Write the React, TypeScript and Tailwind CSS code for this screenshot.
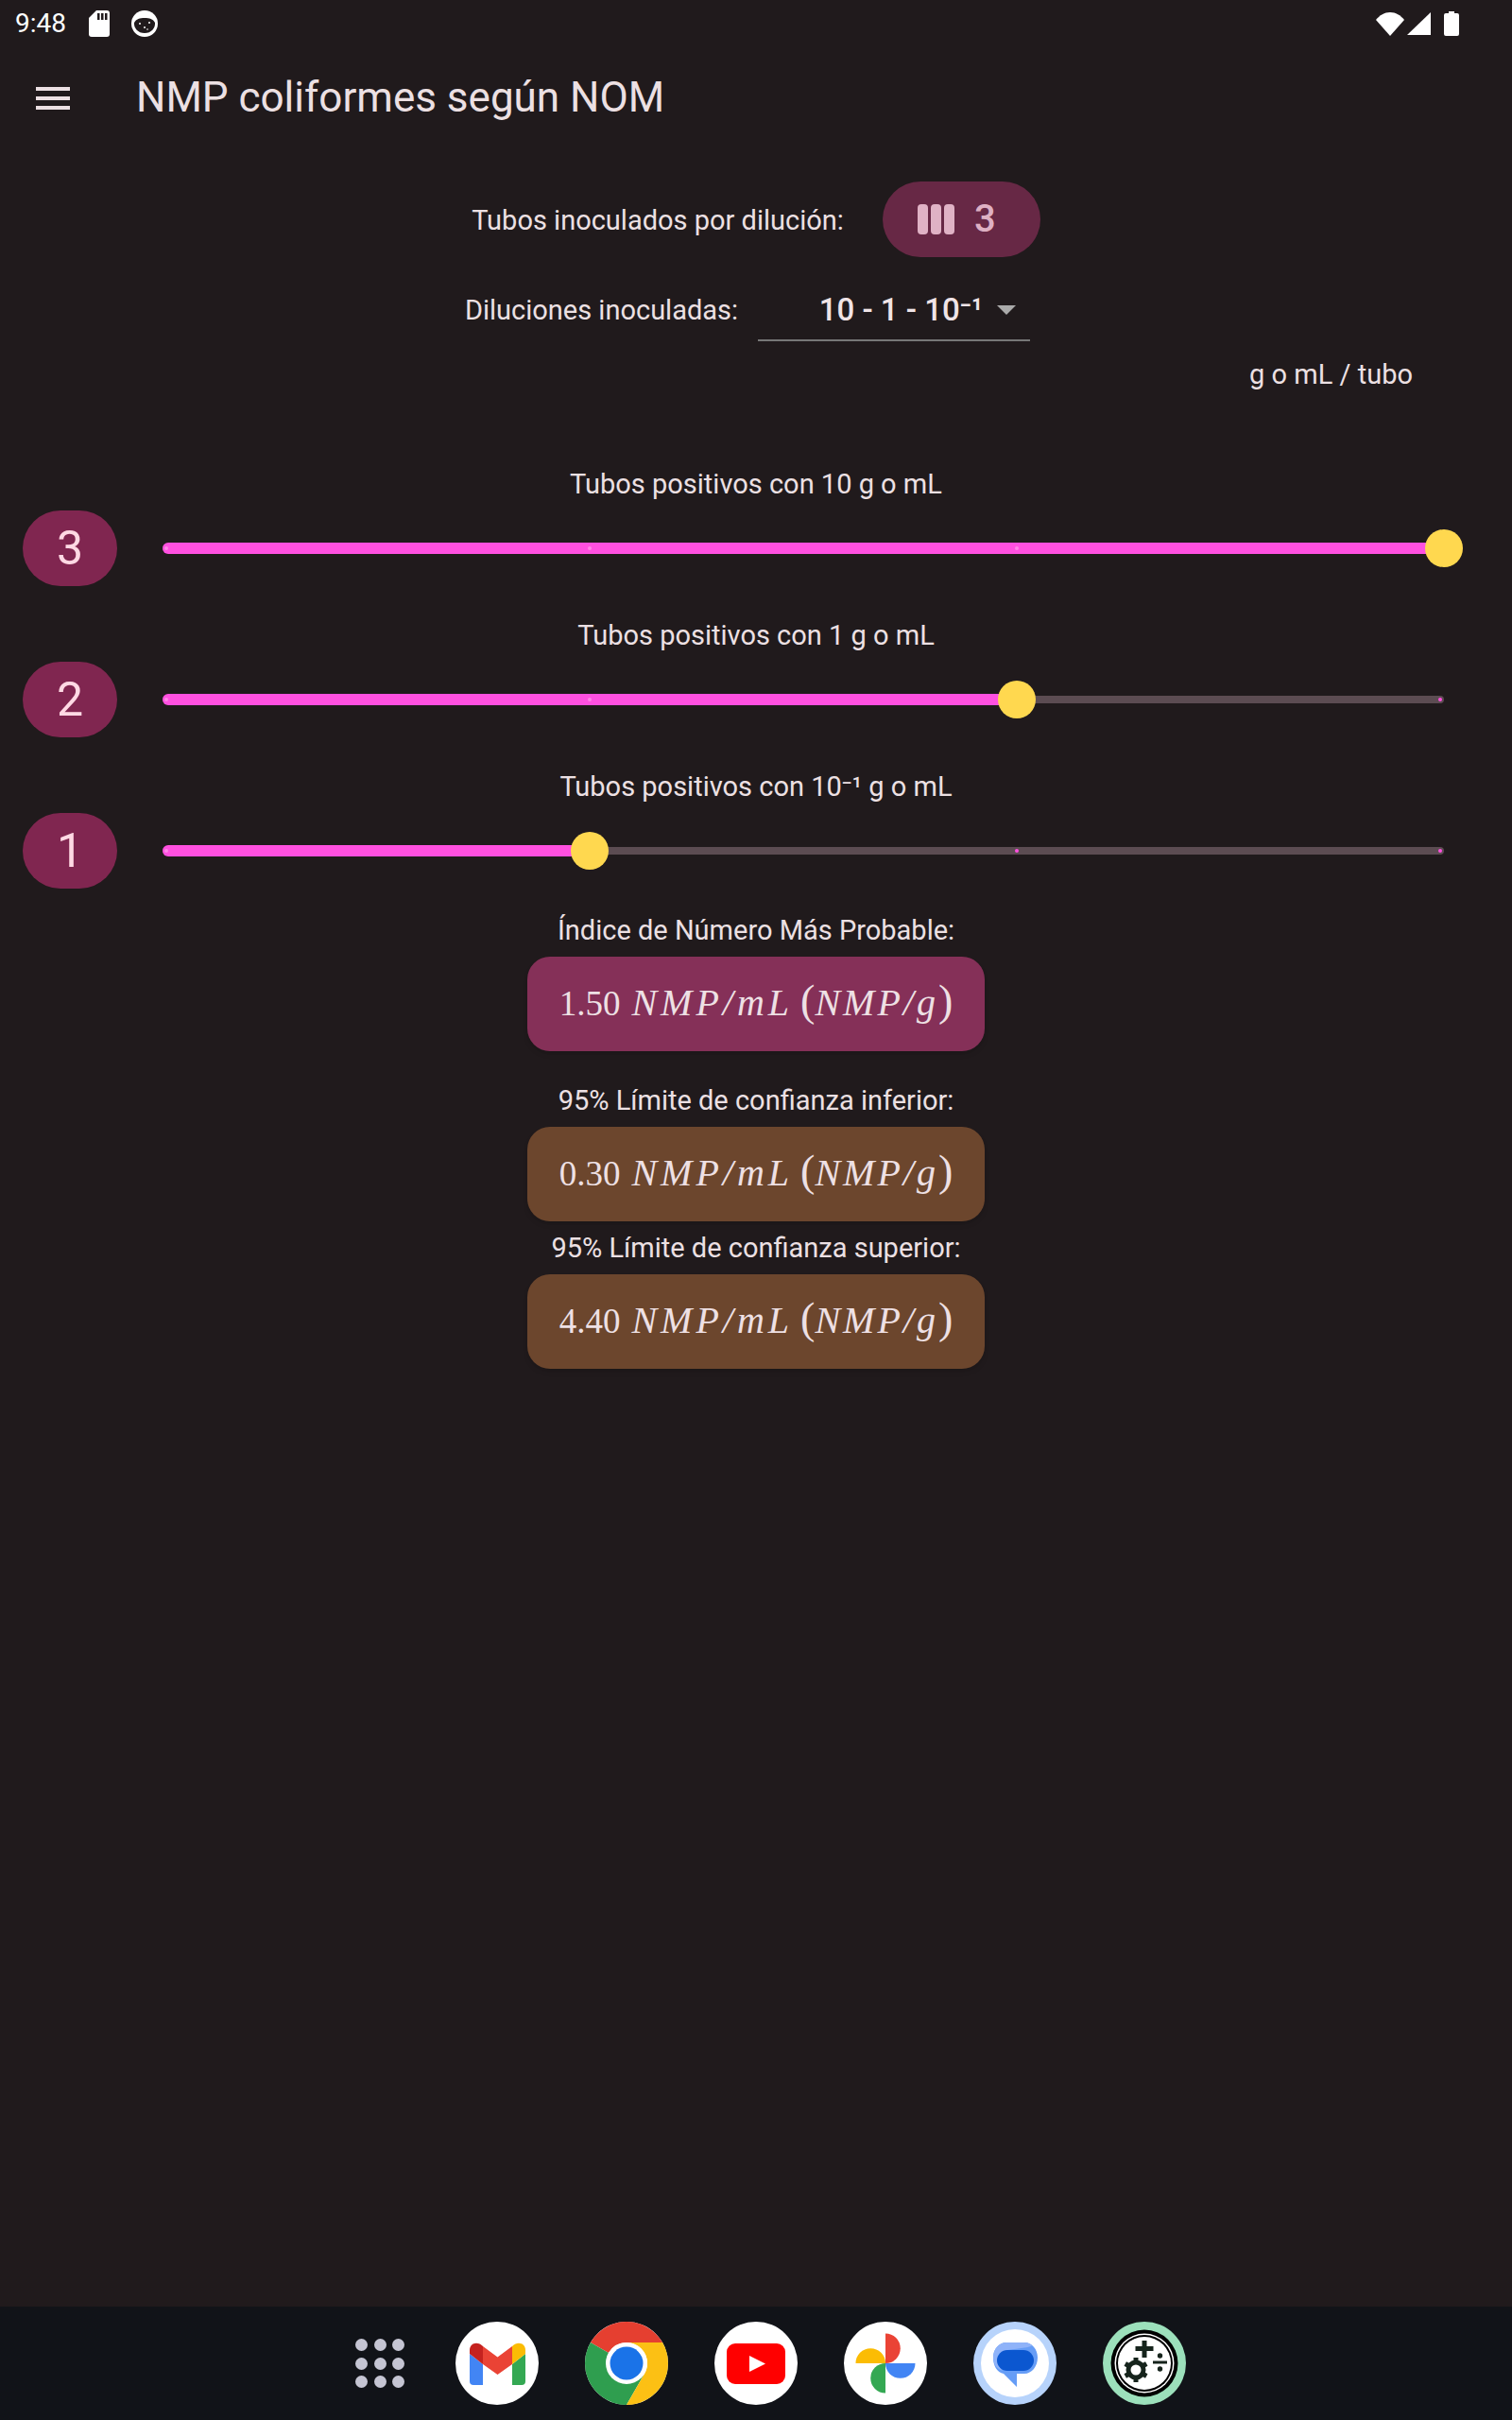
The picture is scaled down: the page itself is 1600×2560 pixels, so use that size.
const sliders = [
  { label: 'Tubos positivos con 10 g o mL', value: 3 },
  { label: 'Tubos positivos con 1 g o mL', value: 2 },
  { label: 'Tubos positivos con 10⁻¹ g o mL', value: 1 },
]

const results = [
  { label: 'Índice de Número Más Probable:', value: '1.50', bg: 'bg-[#853058]', top: 'mt-[24px]' },
  { label: '95% Límite de confianza inferior:', value: '0.30', bg: 'bg-[#6c462d]', top: 'mt-[32px]' },
  { label: '95% Límite de confianza superior:', value: '4.40', bg: 'bg-[#6c462d]', top: 'mt-[8px]' },
]

function SdIcon() {
  return (
    <svg width="22" height="28" viewBox="0 0 22 28">
      <path d="M8 0H19a3 3 0 0 1 3 3V25a3 3 0 0 1-3 3H3a3 3 0 0 1-3-3V8Z" fill="#fff" />
      <path d="M9 3h2.500v7H9ZM13 3h2.500v7H13ZM17 3h2.500v7H17Z" fill="#201a1c" />
    </svg>
  )
}

function DishIcon() {
  return (
    <svg width="28" height="28" viewBox="0 0 28 28">
      <circle cx="14" cy="14" r="14" fill="#fff" />
      <path d="M3 13C5 9 9 8 14 8s9 1 11 5c.5 6-4 11-11 11S2.500 19 3 13Z" fill="#201a1c" />
      <circle cx="9" cy="14" r="1" fill="#fff" />
      <circle cx="14" cy="18" r="1" fill="#fff" />
      <circle cx="19" cy="13" r="1" fill="#fff" />
      <circle cx="17" cy="20" r=".8" fill="#fff" />
    </svg>
  )
}

function StatusRight() {
  return (
    <div className="flex items-center">
      <svg width="30" height="25" viewBox="0 0 30 25">
        <path d="M15 25 0 8C4 3 9 0 15 0s11 3 15 8Z" fill="#fff" />
      </svg>
      <svg className="ml-[3px]" width="25" height="24" viewBox="0 0 25 24">
        <path d="M25 0V24H0Z" fill="#fff" />
      </svg>
      <svg className="ml-[14px]" width="16" height="26" viewBox="0 0 16 26">
        <path d="M5 0h6v2h3a2 2 0 0 1 2 2V24a2 2 0 0 1-2 2H2a2 2 0 0 1-2-2V4a2 2 0 0 1 2-2h3Z" fill="#fff" />
      </svg>
    </div>
  )
}

function Slider({ value }: { value: number }) {
  const pct = (value / 3) * 100
  const ticks = [0, 1, 2, 3]
  return (
    <div className="relative h-[40px] flex-1">
      <div className="absolute left-0 right-0 top-[16px] h-[8px] rounded-full bg-[#5c4c52]" />
      <div
        className="absolute left-0 top-[14px] h-[12px] rounded-full bg-[#ff50e0]"
        style={{ width: `${pct}%` }}
      />
      {ticks.map((t) => (
        <div
          key={t}
          className={`absolute top-[18px] h-[4px] w-[4px] rounded-full ${t <= value ? 'bg-[#ff85e8]' : 'bg-[#ff50e0]'}`}
          style={{ left: t === 0 ? '2px' : t === 3 ? 'calc(100% - 6px)' : `calc(${(t / 3) * 100}% - 2px)` }}
        />
      ))}
      <div
        className="absolute top-0 -ml-[20px] h-[40px] w-[40px] rounded-full bg-[#ffd84f]"
        style={{ left: `${pct}%` }}
      />
    </div>
  )
}

function MathValue({ value }: { value: string }) {
  return (
    <span className="whitespace-nowrap font-['Liberation_Serif',serif] text-[37px] text-[#eee0e4]">
      {value}
      <span className="ml-[12px] text-[40px] italic tracking-[4px]">NMP/mL</span>
      <span className="ml-[8px] text-[46px] font-light">(</span>
      <span className="text-[40px] italic tracking-[3px]">NMP/g</span>
      <span className="text-[46px] font-light">)</span>
    </span>
  )
}

function GmailIcon() {
  return (
    <svg width="88" height="88" viewBox="0 0 88 88">
      <circle cx="44" cy="44" r="44" fill="#fff" />
      <path d="M15 34 29 45V67H19a4 4 0 0 1-4-4Z" fill="#4285f4" />
      <path d="M74 34 60 45V67H70a4 4 0 0 0 4-4Z" fill="#34a853" />
      <path d="M29 26 44.500 37.500 60 26V45L44.500 56 29 45Z" fill="#ea4335" />
      <path d="M15 34V30C15 23 23 20 29 26V45Z" fill="#c5221f" />
      <path d="M74 34V30C74 23 66 20 60 26V45Z" fill="#fbbc04" />
    </svg>
  )
}

function ChromeIcon() {
  return (
    <svg width="88" height="88" viewBox="0 0 88 88">
      <circle cx="44" cy="44" r="44" fill="#fff" />
      <path d="M5.900 22A44 44 0 0 1 82.100 22H44A22 22 0 0 0 25 33Z" fill="#e53f30" />
      <path d="M5.900 22 25 33A22 22 0 0 0 63 55L44 88A44 44 0 0 1 5.900 22Z" fill="#2f9e4f" />
      <path d="M82.100 22A44 44 0 0 1 44 88L63 55A22 22 0 0 0 44 22Z" fill="#fcc014" />
      <circle cx="44" cy="44" r="22" fill="#fff" />
      <circle cx="44" cy="44" r="17.500" fill="#1a73e8" />
    </svg>
  )
}

function YoutubeIcon() {
  return (
    <svg width="88" height="88" viewBox="0 0 88 88">
      <circle cx="44" cy="44" r="44" fill="#fff" />
      <rect x="13" y="23" width="62" height="43" rx="9" fill="#ff0000" />
      <path d="M37 36 54 44.500 37 53Z" fill="#fff" />
    </svg>
  )
}

function PhotosIcon() {
  return (
    <svg width="88" height="88" viewBox="0 0 88 88">
      <circle cx="44" cy="44" r="44" fill="#fff" />
      <path d="M44 44V12.500A15.750 15.750 0 0 1 44 44Z" fill="#ea4335" />
      <path d="M44 44H12.500A15.750 15.750 0 0 1 44 44Z" fill="#fbbc04" />
      <path d="M44 44H75.500A15.750 15.750 0 0 1 44 44Z" fill="#4285f4" />
      <path d="M44 44V75.500A15.750 15.750 0 0 1 44 44Z" fill="#34a853" />
    </svg>
  )
}

function MessagesIcon() {
  return (
    <svg width="88" height="88" viewBox="0 0 88 88">
      <circle cx="44" cy="44" r="44" fill="#b7d3fb" />
      <circle cx="44" cy="44" r="36" fill="#fff" />
      <path d="M35 22H54C62 22 68 29 68 38S62 55 54 55H46V69L32 55C25 54 21 46 21 38 21 29 27 22 35 22Z" fill="#669df6" />
      <path d="M35 22H54C57 22 60 23 62 25 62 27 50 28 36 30 30 31 27 34 26 41 26 46 28 49 31 52 25 50 21 45 21 38 21 29 27 22 35 22Z" fill="#8fb3f9" />
      <rect x="25" y="30" width="39" height="22" rx="11" fill="#0b57d0" />
    </svg>
  )
}

function CalcIcon() {
  const teeth = [0, 60, 120, 180, 240, 300]
  return (
    <svg width="88" height="88" viewBox="0 0 88 88">
      <circle cx="44" cy="44" r="44" fill="#9ce0bb" />
      <circle cx="44" cy="44" r="35.500" fill="#000" />
      <circle cx="44" cy="44" r="31.500" fill="#fff" />
      <circle cx="44" cy="44" r="30" fill="#000" />
      <circle cx="44" cy="44" r="28" fill="#fff" />
      <path d="M41.500 20h5v6h7v5h-7v7h-5v-7h-7v-5h7Z" fill="#16241c" />
      <path d="M53 41.500H68V44.500H53Z" fill="#16241c" />
      <circle cx="60.500" cy="36" r="2.700" fill="#16241c" />
      <circle cx="60.500" cy="50" r="2.700" fill="#16241c" />
      <circle cx="35" cy="51" r="8" fill="none" stroke="#16241c" strokeWidth="5" />
      {teeth.map((a) => (
        <rect key={a} x="32.500" y="38" width="5" height="6" fill="#16241c" transform={`rotate(${a} 35 51)`} />
      ))}
    </svg>
  )
}

export default function App() {
  const dots = [0, 1, 2, 3, 4, 5, 6, 7, 8]
  return (
    <div className="flex h-[2560px] w-[1600px] flex-col bg-[#201a1c] font-['Roboto',sans-serif] text-[29px] text-[#ece0e3]">
      {/* status bar */}
      <div className="flex h-[50px] items-center justify-between pl-[16px] pr-[56px]">
        <div className="flex items-center">
          <span className="text-[28px] text-white">9:48</span>
          <span className="ml-[24px] flex"><SdIcon /></span>
          <span className="ml-[23px] flex"><DishIcon /></span>
        </div>
        <StatusRight />
      </div>

      {/* app bar */}
      <div className="flex h-[108px] items-center pl-[38px]">
        <div className="flex w-[36px] flex-col gap-[6px]">
          <div className="h-[4px] bg-[#ece0e3]" />
          <div className="h-[4px] bg-[#ece0e3]" />
          <div className="h-[4px] bg-[#ece0e3]" />
        </div>
        <h1 className="mb-[3px] ml-[70px] text-[44px] font-normal">NMP coliformes según NOM</h1>
      </div>

      {/* tubes per dilution */}
      <div className="mt-[34px] flex items-center justify-center gap-[41px]">
        <span className="pt-[3px]">Tubos inoculados por dilución:</span>
        <div className="flex h-[80px] w-[167px] items-center justify-center gap-[21px] rounded-full bg-[#672845] pr-[10px] text-[40px] font-medium text-[#deb0c3]">
          <div className="flex gap-[3px]">
            <div className="h-[32px] w-[11px] rounded-[4px] bg-[#e0b2c5]" />
            <div className="h-[32px] w-[11px] rounded-[4px] bg-[#e0b2c5]" />
            <div className="h-[32px] w-[11px] rounded-[4px] bg-[#e0b2c5]" />
          </div>
          <span>3</span>
        </div>
      </div>

      {/* dilutions dropdown */}
      <div className="mt-[22px] flex items-center justify-center gap-[21px] pr-[18px]">
        <span className="pt-[3px]">Diluciones inoculadas:</span>
        <div className="flex h-[67px] w-[288px] items-center justify-end border-b-2 border-[#777] pr-[15px] pt-[3px]">
          <span className="text-[33px] font-medium text-[#f0e4e7]">10 - 1 - 10⁻¹</span>
          <svg className="ml-[15px]" width="20" height="10" viewBox="0 0 20 10">
            <path d="M0 0H20L10 10Z" fill="#aaa" />
          </svg>
        </div>
      </div>

      <div className="mt-[16px] flex h-[40px] items-center justify-end pr-[105px]">g o mL / tubo</div>

      {/* sliders */}
      <div className="mt-[75px] flex flex-col gap-[32px]">
        {sliders.map((s) => (
          <div key={s.label} className="flex flex-col">
            <div className="flex h-[40px] items-center justify-center pt-[2px]">{s.label}</div>
            <div className="mt-[8px] flex h-[80px] items-center pl-[24px] pr-[72px]">
              <div className="flex h-[80px] w-[100px] items-center justify-center rounded-full bg-[#802650] text-[50px] text-[#ffd9e4]">
                {s.value}
              </div>
              <div className="ml-[48px] flex flex-1">
                <Slider value={s.value} />
              </div>
            </div>
          </div>
        ))}
      </div>

      {/* results */}
      <div className="flex flex-col items-center">
        {results.map((r) => (
          <div key={r.label} className={`flex flex-col items-center ${r.top}`}>
            <div className="flex h-[40px] items-center pt-[2px]">{r.label}</div>
            <div className={`mt-[8px] flex h-[100px] w-[484px] items-center justify-center rounded-[24px] pb-[8px] shadow-md ${r.bg}`}>
              <MathValue value={r.value} />
            </div>
          </div>
        ))}
      </div>

      {/* dock */}
      <div className="mt-auto flex h-[120px] items-center gap-[49px] bg-[#111318] pl-[482px]">
        <div className="-ml-[106px] mr-[5px] grid w-[52px] grid-cols-3 gap-[6.500px]">
          {dots.map((d) => (
            <div key={d} className="h-[13px] w-[13px] rounded-full bg-[#c5c5d3]" />
          ))}
        </div>
        <GmailIcon />
        <ChromeIcon />
        <YoutubeIcon />
        <PhotosIcon />
        <MessagesIcon />
        <CalcIcon />
      </div>
    </div>
  )
}
